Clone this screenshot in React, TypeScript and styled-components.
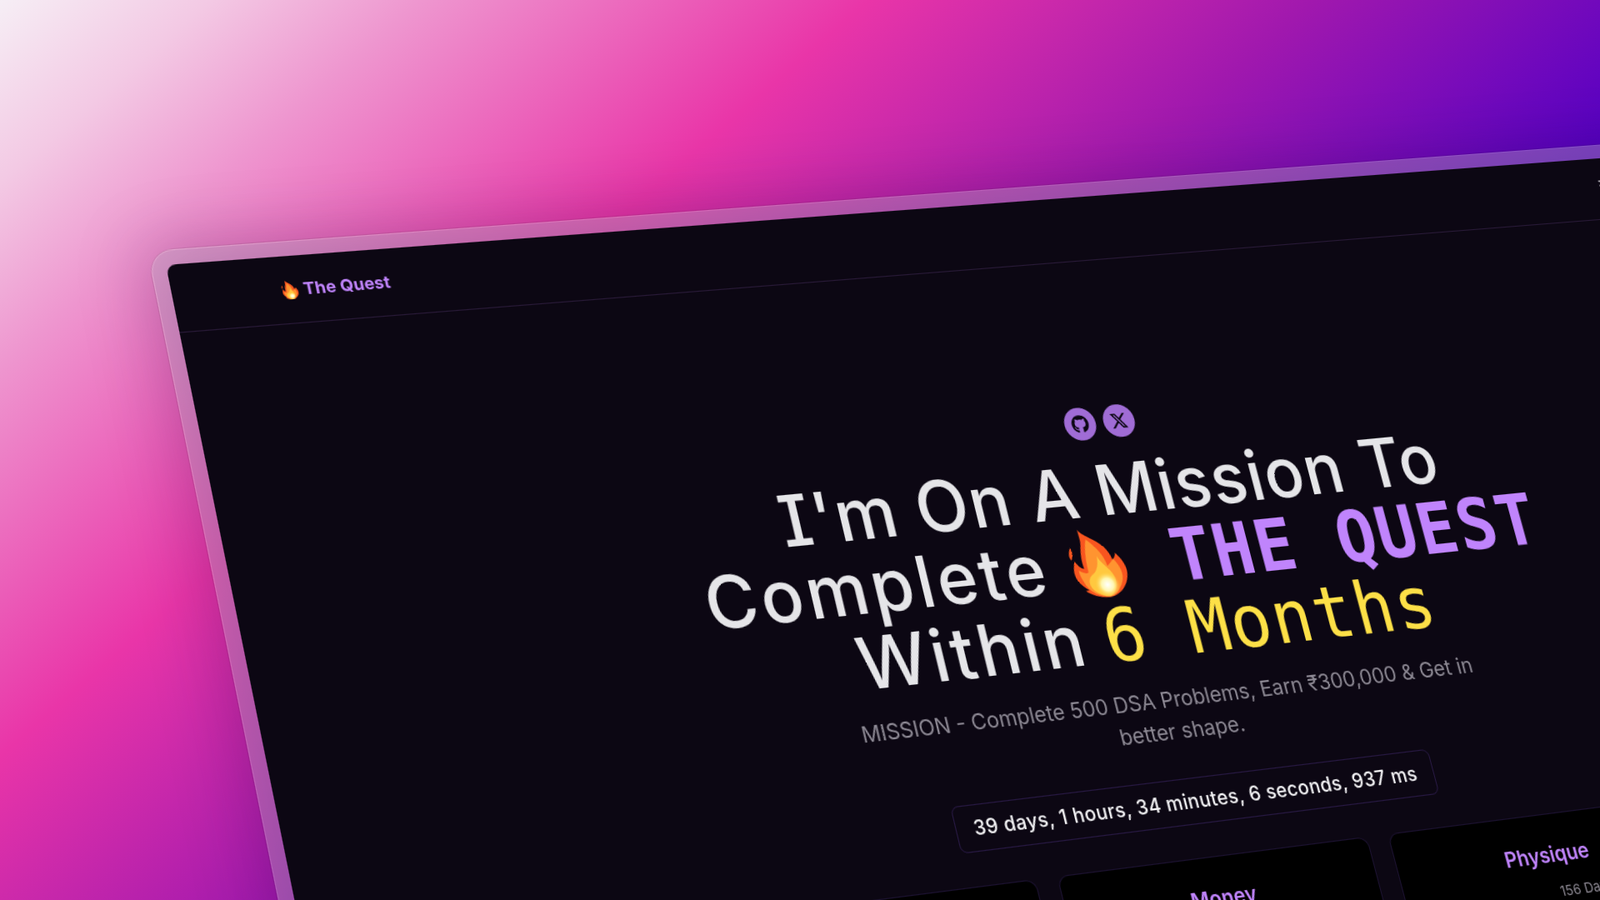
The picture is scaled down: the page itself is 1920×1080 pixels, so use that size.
import React from "react";
import styled, { createGlobalStyle } from "styled-components";
import { FaGithub, FaXTwitter } from "react-icons/fa6";
import { Menu } from "lucide-react";

const GlobalStyle = createGlobalStyle`
  html, body {
    margin: 0;
    padding: 0;
    height: 100%;
    overflow: hidden;
  }
  body {
    font-family: "Inter", "Noto Sans", sans-serif;
  }
`;

const Backdrop = styled.div`
  position: relative;
  width: 1920px;
  height: 1080px;
  overflow: hidden;
  background: linear-gradient(
    139deg,
    #f6eef5 0%,
    #f3c9e4 8%,
    #ee96cf 16%,
    #e935a8 33%,
    #a018ae 50%,
    #5600c4 67%,
    #3c00a8 100%
  );
`;

// the browser window lies tilted on the gradient, like a shot on a desk
const BrowserWindow = styled.div`
  position: absolute;
  left: 0;
  top: 0;
  width: 1920px;
  height: 1400px;
  transform-origin: 0 0;
  transform: matrix3d(1.187, -0.0642, 0, 0.0000726, 0.2181, 1.1119, 0, -0.0000532, 0, 0, 1, 0, 199, 318, 0, 1);
  border-radius: 10px;
  background: #0c0713;
  box-shadow:
    0 0 0 15px rgba(190, 175, 200, 0.36),
    0 0 70px 20px rgba(40, 0, 60, 0.26);

  &::before {
    content: "";
    position: absolute;
    inset: -16.5px;
    border: 1.5px solid rgba(255, 255, 255, 0.3);
    border-radius: 26px;
    box-shadow: 0 0 0 0.5px rgba(0, 0, 0, 0.16);
    pointer-events: none;
  }
`;

const Nav = styled.nav`
  box-sizing: border-box;
  height: 72px;
  padding: 0 108px 0 112px;
  display: flex;
  align-items: center;
  justify-content: space-between;
  border-bottom: 1px solid rgba(192, 132, 252, 0.16);
`;

const Logo = styled.div`
  display: flex;
  align-items: center;
  gap: 5px;
  font-size: 18px;
  font-weight: 700;
  color: #c084fc;
`;

const NavEnd = styled.div`
  width: 182px;
  margin-bottom: 8px;
  color: #d8d4dc;
  display: flex;
`;

const Hero = styled.main`
  display: flex;
  flex-direction: column;
  align-items: center;
  padding-top: 161px;
`;

const Socials = styled.div`
  display: flex;
  gap: 9px;
`;

const SocialLink = styled.a`
  width: 36px;
  height: 36px;
  border-radius: 50%;
  background: #a06cd5;
  color: #0c0713;
  display: flex;
  align-items: center;
  justify-content: center;
  font-size: 20px;
`;

const Heading = styled.h1`
  margin: 16px 0 0 2px;
  font-size: 76px;
  line-height: 78px;
  font-weight: 500;
  text-align: center;
  color: #e5e5e8;
  font-feature-settings: "cv08";
`;

const HeadWords = styled.span<{ $spacing: number }>`
  letter-spacing: ${(p) => p.$spacing}px;
`;

const Mono = styled.span<{ $tone: string; $weight: number }>`
  font-family: "DejaVu Sans Mono", "Liberation Mono", monospace;
  font-size: 78px;
  font-weight: ${(p) => p.$weight};
  color: ${(p) => p.$tone};
  letter-spacing: 1.6px;
`;

const Flame = styled.svg<{ $size: number; $gapLeft: number; $gapRight: number; $drop: number }>`
  width: ${(p) => p.$size}px;
  height: ${(p) => p.$size * 1.2}px;
  vertical-align: ${(p) => p.$drop}px;
  margin: -40px ${(p) => p.$gapRight}px -40px ${(p) => p.$gapLeft}px;
`;

const Subtitle = styled.p`
  margin: 17px 0 0 12px;
  width: 768px;
  font-size: 23px;
  line-height: 34px;
  font-weight: 400;
  text-align: center;
  color: #8c8893;
`;

const Timer = styled.div`
  margin: 32.5px 0 0 10px;
  box-sizing: border-box;
  height: 49px;
  width: 548px;
  display: flex;
  align-items: center;
  justify-content: center;
  font-size: 21px;
  font-weight: 500;
  letter-spacing: 0.4px;
  color: #f2f2f4;
  border: 1px solid rgba(139, 92, 246, 0.22);
  border-radius: 8px;
`;

const Cards = styled.div`
  margin: 35.5px 0 0 10px;
  display: grid;
  grid-template-columns: repeat(3, 355px);
  gap: 24px;
`;

const Card = styled.section`
  height: 280px;
  padding-top: 29px;
  box-sizing: border-box;
  background: #000;
  border: 1px solid rgba(139, 92, 246, 0.2);
  border-radius: 12px;
  text-align: center;
`;

const CardTitle = styled.h2`
  margin: 0;
  font-size: 22.5px;
  font-weight: 600;
  color: #c084fc;
`;

const CardNote = styled.p`
  margin: 17px 0 0 181px;
  font-size: 15px;
  text-align: left;
  color: #8b8791;
`;

const FlameIcon: React.FC<{ size: number; gapLeft?: number; gapRight?: number; drop?: number }> = ({
  size,
  gapLeft = 0,
  gapRight = 0,
  drop = 0,
}) => (
  <Flame
    $size={size}
    $gapLeft={gapLeft}
    $gapRight={gapRight}
    $drop={drop}
    viewBox="40 30 220 265"
    role="img"
    aria-label="🔥"
  >
    <defs>
      <radialGradient id="flameCore" cx="50%" cy="50%" r="50%">
        <stop offset="0%" stopColor="#ffffff" />
        <stop offset="50%" stopColor="#fff7b0" />
        <stop offset="100%" stopColor="#ffd54a" stopOpacity="0" />
      </radialGradient>
    </defs>
    <path
      fill="#f8551f"
      d="M102 38C110 62 165 78 190 115C205 140 205 150 207 158C218 150 222 140 222 134C240 155 255 185 250 210C245 245 215 285 165 290C125 290 95 275 78 260L92 258C65 240 48 215 52 185C54 170 60 158 62 150C70 165 80 180 92 180C88 150 92 125 100 95C105 75 100 55 102 38Z"
    />
    <path fill="#f8551f" d="M58 100C64 115 62 135 52 146C42 130 50 115 58 100Z" />
    <path
      fill="#ff9430"
      d="M124 76C150 100 178 135 182 178C195 170 205 160 210 155C230 185 240 215 217 250C200 275 185 285 165 288C130 288 88 265 78 225C70 205 70 195 70 185C85 195 95 200 105 195C105 160 108 115 124 76Z"
    />
    <path
      fill="#ffc83f"
      d="M150 140C165 180 205 195 200 240C195 270 175 285 165 287C140 285 100 265 100 235C100 215 115 205 125 200C138 190 150 170 150 140Z"
    />
    <ellipse cx="165" cy="245" rx="46" ry="46" fill="url(#flameCore)" />
  </Flame>
);

const App: React.FC = () => {
  return (
    <Backdrop>
      <GlobalStyle />
      <BrowserWindow>
        <Nav>
          <Logo>
            <FlameIcon size={18} />
            The Quest
          </Logo>
          <NavEnd>
            <Menu size={18} />
          </NavEnd>
        </Nav>
        <Hero>
          <Socials>
            <SocialLink aria-label="GitHub">
              <FaGithub />
            </SocialLink>
            <SocialLink aria-label="X">
              <FaXTwitter />
            </SocialLink>
          </Socials>
          <Heading>
            <HeadWords $spacing={1.35}>I'm On A Mission To</HeadWords>
            <br />
            <HeadWords $spacing={3.8}>Complete</HeadWords>{" "}
            <FlameIcon size={66} gapLeft={4} gapRight={32} drop={29} />{" "}
            <Mono $tone="#c084fc" $weight={700}>
              THE QUEST
            </Mono>
            <br />
            <HeadWords $spacing={4}>Within</HeadWords>{" "}
            <Mono $tone="#fde047" $weight={400}>
              6 Months
            </Mono>
          </Heading>
          <Subtitle>MISSION - Complete 500 DSA Problems, Earn ₹300,000 &amp; Get in better shape.</Subtitle>
          <Timer>39 days, 1 hours, 34 minutes, 6 seconds, 937 ms</Timer>
          <Cards>
            <Card>
              <CardTitle>DSA</CardTitle>
              <CardNote>156 Days</CardNote>
            </Card>
            <Card>
              <CardTitle>Money</CardTitle>
              <CardNote>156 Days</CardNote>
            </Card>
            <Card>
              <CardTitle>Physique</CardTitle>
              <CardNote>156 Days</CardNote>
            </Card>
          </Cards>
        </Hero>
      </BrowserWindow>
    </Backdrop>
  );
};

export default App;
